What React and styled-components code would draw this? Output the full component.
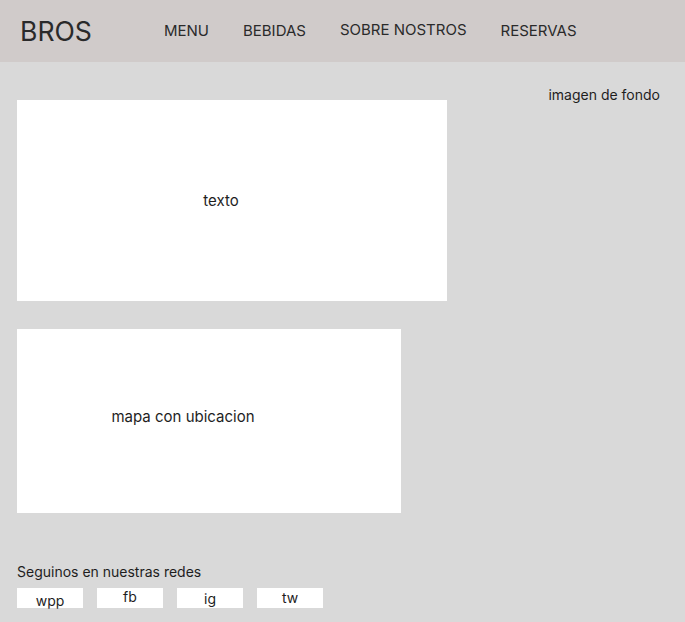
import React from "react";
import styled, { createGlobalStyle } from "styled-components";

const Global = createGlobalStyle`
  body {
    margin: 0;
    background-color: #d9d9d9;
    font-family: Inter, "Noto Sans", sans-serif;
    color: #1e1e1e;
  }
`;

const Header = styled.header`
  height: 62px;
  background-color: #d0cbca;
  display: flex;
  align-items: center;
  padding-left: 20px;
`;

const Logo = styled.h1`
  margin: 0;
  font-size: 26.6px;
  font-weight: 400;
  color: #2a2a2a;
`;

const Nav = styled.nav`
  display: flex;
  gap: 34px;
  margin-left: 72px;
  position: relative;
  top: -1px;
`;

const NavItem = styled.a`
  font-size: 15px;
  color: #2a2a2a;
  text-decoration: none;
  position: relative;
  top: ${(p) => p.$up || 0}px;
`;

const Main = styled.main`
  display: flex;
  justify-content: space-between;
  padding: 0 25px 14px 17px;
`;

const Column = styled.div`
  display: flex;
  flex-direction: column;
  padding-top: 38px;
`;

const Card = styled.div`
  background-color: #ffffff;
  width: ${(p) => p.$w}px;
  height: ${(p) => p.$h}px;
  display: flex;
  align-items: center;
  justify-content: center;
  box-sizing: border-box;
  padding-right: ${(p) => p.$pr || 0}px;
  padding-bottom: ${(p) => p.$pb || 0}px;
  margin-bottom: ${(p) => p.$mb || 0}px;
  font-size: 15px;
`;

const BgLabel = styled.span`
  font-size: 14px;
  margin-top: 24px;
  align-self: flex-start;
`;

const Social = styled.section`
  display: flex;
  flex-direction: column;
  gap: 8px;
`;

const SocialTitle = styled.p`
  margin: 0;
  font-size: 14px;
`;

const SocialRow = styled.div`
  display: flex;
  gap: 14px;
`;

const SocialBtn = styled.div`
  width: 66px;
  height: 20px;
  background-color: #ffffff;
  font-size: 14px;
  display: flex;
  justify-content: center;
  align-items: center;
  padding-top: ${(p) => p.$pt || 0}px;
  padding-bottom: ${(p) => p.$pb || 0}px;
  box-sizing: border-box;
`;

export default function App() {
  return (
    <>
      <Global />
      <Header>
        <Logo>BROS</Logo>
        <Nav>
          <NavItem>MENU</NavItem>
          <NavItem>BEBIDAS</NavItem>
          <NavItem $up={-1}>SOBRE NOSTROS</NavItem>
          <NavItem>RESERVAS</NavItem>
        </Nav>
      </Header>
      <Main>
        <Column>
          <Card $w={430} $h={201} $pr={22} $mb={28}>
            texto
          </Card>
          <Card $w={384} $h={184} $pr={52} $pb={10} $mb={50}>
            mapa con ubicacion
          </Card>
          <Social>
            <SocialTitle>Seguinos en nuestras redes</SocialTitle>
            <SocialRow>
              <SocialBtn $pt={4}>wpp</SocialBtn>
              <SocialBtn $pb={4}>fb</SocialBtn>
              <SocialBtn>ig</SocialBtn>
              <SocialBtn $pb={2}>tw</SocialBtn>
            </SocialRow>
          </Social>
        </Column>
        <BgLabel>imagen de fondo</BgLabel>
      </Main>
    </>
  );
}
